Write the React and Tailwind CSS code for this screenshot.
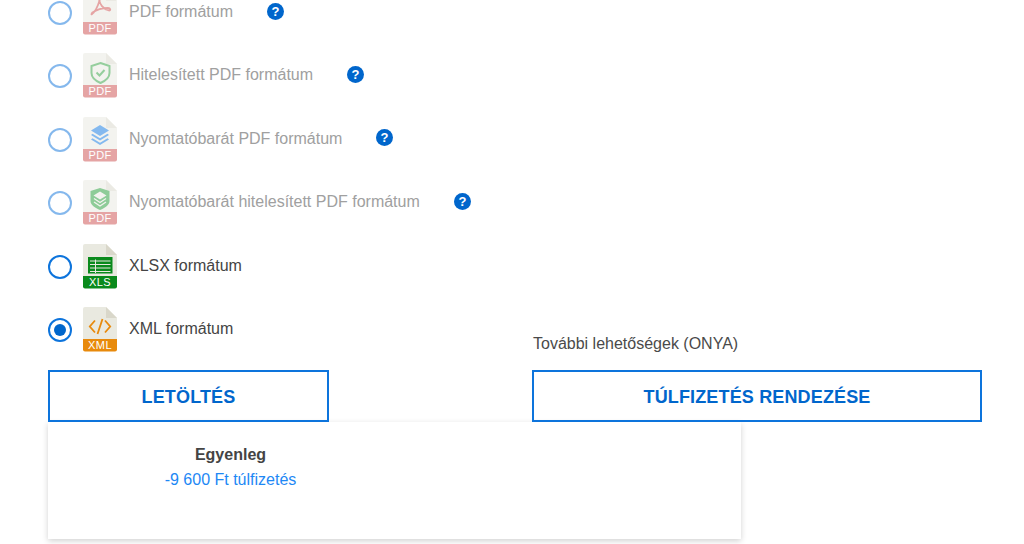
import React from "react";

const FONT = "font-['Liberation_Sans',Arial,sans-serif]";

const FileIcon = ({ label, band, children }) => (
  <svg width="34" height="45" viewBox="0 0 34 45" className="shrink-0">
    <path d="M2 0H23L34 11V33H0V2A2 2 0 0 1 2 0Z" fill="#e9e9e0" />
    <path d="M23 0L34 11H23Z" fill="#d9d7ca" />
    <path d="M0 32H34V42.500A2 2 0 0 1 32 44.500H2A2 2 0 0 1 0 42.500Z" fill={band} />
    {children}
    <text
      x="17"
      y="42.200"
      textAnchor="middle"
      fontSize="11"
      fontFamily="Liberation Sans, Arial, sans-serif"
      fill="#fff"
      letterSpacing="0.4"
    >
      {label}
    </text>
  </svg>
);

const AcrobatGlyph = () => (
  <path
    d="M9 24C12 22 15 16 17 9C18 5.500 15.500 5 16 9C16.500 14 20 19 26 20.500C28 20.500 27.500 18 25 18C20 18 13 20 9.500 22.500C8 24 8.500 25 9 24Z"
    fill="none"
    stroke="#cc4b4c"
    strokeWidth="1.800"
  />
);

const ShieldGlyph = () => (
  <g>
    <path d="M17.500 10L26.500 13V20C26.500 25 22 28 17.500 30C13 28 8.500 25 8.500 20V13Z" fill="none" stroke="#2e9e3e" strokeWidth="2" />
    <path d="M13.500 19.500L16.500 22.500L21.500 17" fill="none" stroke="#2e9e3e" strokeWidth="2" />
  </g>
);

const LayersGlyph = () => (
  <g fill="#0b76e0">
    <path d="M17 8L26 13.500L17 19L8 13.500Z" />
    <path d="M9.500 16.800L17 21.300L24.500 16.800L26 18L17 23.500L8 18Z" />
    <path d="M9.500 21.300L17 25.800L24.500 21.300L26 22.500L17 28L8 22.500Z" />
  </g>
);

const ShieldLayersGlyph = () => (
  <g>
    <path d="M17 8L26.500 11V21C26.500 25 22 28 17 30C12 28 7.500 25 7.500 21V11Z" fill="#1f9a34" />
    <path d="M17 11.500L23.500 15.500L17 19.500L10.500 15.500Z" fill="#e9e9e0" />
    <path d="M11 18.500L17 22.500L23 18.500M11 22L17 26L23 22" fill="none" stroke="#e9e9e0" strokeWidth="1.300" />
  </g>
);

const SheetGlyph = () => (
  <g>
    <rect x="5" y="13" width="24.500" height="16.500" fill="#0a8a1c" />
    <path d="M7 17H27.500M7 20.500H27.500M7 24H27.500M7 27.500H27.500M12.500 15.500V29" stroke="#e9e9e0" strokeWidth="1" />
  </g>
);

const CodeGlyph = () => (
  <path
    d="M12 13.500L6.800 19.500L12 25.500M22 13.500L27.200 19.500L22 25.500M19.500 12L14.500 27"
    fill="none"
    stroke="#e88a0c"
    strokeWidth="1.800"
  />
);

const HelpIcon = () => (
  <svg width="17" height="17" viewBox="0 0 17 17">
    <circle cx="8.500" cy="8.500" r="8.500" fill="#0066cc" />
    <text x="8.500" y="13" textAnchor="middle" fontSize="13" fontWeight="700" fontFamily="Liberation Sans, Arial, sans-serif" fill="#fff">
      ?
    </text>
  </svg>
);

const formats = [
  { label: "PDF formátum", icon: <FileIcon label="PDF" band="#cc4b4c"><AcrobatGlyph /></FileIcon>, disabled: true },
  { label: "Hitelesített PDF formátum", icon: <FileIcon label="PDF" band="#cc4b4c"><ShieldGlyph /></FileIcon>, disabled: true },
  { label: "Nyomtatóbarát PDF formátum", icon: <FileIcon label="PDF" band="#cc4b4c"><LayersGlyph /></FileIcon>, disabled: true },
  { label: "Nyomtatóbarát hitelesített PDF formátum", icon: <FileIcon label="PDF" band="#cc4b4c"><ShieldLayersGlyph /></FileIcon>, disabled: true },
  { label: "XLSX formátum", icon: <FileIcon label="XLS" band="#0a8a1c"><SheetGlyph /></FileIcon> },
  { label: "XML formátum", icon: <FileIcon label="XML" band="#e88a0c"><CodeGlyph /></FileIcon>, selected: true },
];

const FormatRow = ({ item }) => (
  <div className="flex h-[63.4px] items-start">
    <div className={`flex h-[45px] items-center ${item.disabled ? "opacity-50" : ""}`}>
      <span className="mt-px flex h-6 w-6 items-center justify-center rounded-full border-2 border-[#0d74dc]">
        {item.selected && <span className="h-3 w-3 rounded-full bg-[#0066cc]" />}
      </span>
      <span className="ml-[11px] flex">{item.icon}</span>
    </div>
    <div className="flex h-[44px] items-center">
      <span className={`ml-3 text-[16px] ${item.disabled ? "text-[#a0a0a0]" : "text-[#444]"}`}>{item.label}</span>
      {item.disabled && (
        <span className="mb-[2px] ml-[34px] flex">
          <HelpIcon />
        </span>
      )}
    </div>
  </div>
);

const App = () => {
  return (
    <div className={`h-[544px] w-[1024px] overflow-hidden bg-white ${FONT}`}>
      <div className="-mt-[10px] pl-12">
        {formats.map((item) => (
          <FormatRow key={item.label} item={item} />
        ))}
      </div>

      <div className="-mt-[36px] flex items-end pl-12">
        <button className="h-[52px] w-[281px] border-2 border-[#0d74dc] pt-[2px] text-[18px] font-bold tracking-[0.15px] text-[#0066cc]">
          LETÖLTÉS
        </button>
        <div className="ml-[203px] w-[450px]">
          <p className="mb-[16px] pl-px text-[16px] leading-[20px] text-[#4a4a4a]">További lehetőségek (ONYA)</p>
          <button className="h-[52px] w-full border-2 border-[#0d74dc] pt-[2px] text-[18px] font-bold tracking-[0.15px] text-[#0066cc]">
            TÚLFIZETÉS RENDEZÉSE
          </button>
        </div>
      </div>

      <div className="ml-12 h-[117px] w-[693px] bg-white pt-[22px] shadow-[0_2px_6px_rgba(0,0,0,0.18)]">
        <div className="w-[365px] text-center">
          <p className="text-[16px] leading-[22px] font-bold text-[#444]">Egyenleg</p>
          <p className="mt-[3px] text-[16px] leading-[22px] text-[#1e88f5]">-9 600 Ft túlfizetés</p>
        </div>
      </div>
    </div>
  );
};

export default App;
